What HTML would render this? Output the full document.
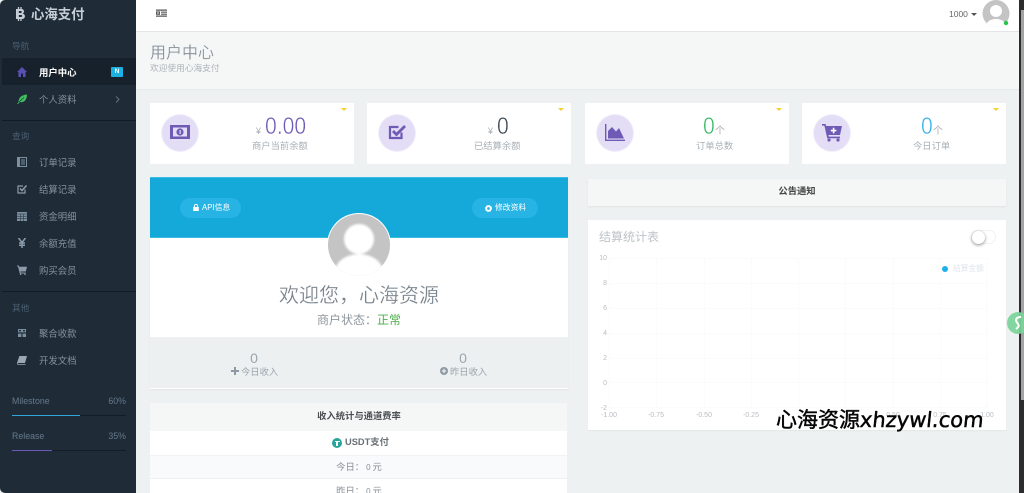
<!DOCTYPE html>
<html lang="zh"><head><meta charset="utf-8"><title>用户中心</title>
<style>
html,body{margin:0;padding:0;width:1024px;height:493px;overflow:hidden;background:#eef1f2}
body{position:relative;font-family:"Liberation Sans","Noto Sans CJK SC",sans-serif}
#w{position:absolute;left:0;top:0;width:1024px;height:493px;filter:blur(.35px);overflow:hidden}
.a{position:absolute}
.t{position:absolute;white-space:nowrap;line-height:14px;height:14px}
.c{text-align:center;transform:translateX(-50%)}
.side{left:0;top:0;width:136px;height:493px;background:#1f2c38;border-radius:5px 0 0 5px}
.sl{font-size:8.6px;color:#4b5e70;left:12px}
.si{font-size:9.4px;color:#84919e;left:39px}
.ic{position:absolute;left:17px;width:10px;height:10px}
.card{position:absolute;top:103px;width:204px;height:61px;background:#fff;border-radius:1px}
.circ{position:absolute;left:12px;top:12px;width:36px;height:36px;border-radius:50%;background:#e3def6;box-shadow:0 0 0 1px #f1eefb}
.circ svg{position:absolute;left:8px;top:7px;width:20px;height:20px}
.tri{position:absolute;right:7px;top:5px;width:0;height:0;border-left:3px solid transparent;border-right:3px solid transparent;border-top:3px solid #f6d02e}
.lb{font-size:9.3px;color:#a9b0b6}
.num{font-size:24px;line-height:24px;height:24px;font-weight:400;transform:scaleX(.88);transform-origin:left center;-webkit-text-stroke:.45px #fff}
.btn{position:absolute;top:198px;height:20px;border-radius:10px;background:#27b4e4;color:#fff;font-size:7.8px;line-height:20px;white-space:nowrap}
.btn svg{position:absolute;top:6px}
.btn span{position:absolute;top:0}
.gy{font-size:9.3px;color:#9aa5ad}
.yl{font-size:7px;color:#b8bec4;text-align:right;width:20px;left:587px}
.xl{font-size:7px;color:#b8bec4;top:409px}
</style></head><body><div id="w">

<!-- main -->
<div class="a" style="left:136px;top:0;width:883px;height:32px;background:#fff;border-bottom:1px solid #e2e5e6;box-sizing:border-box"></div>
<div class="a" style="left:136px;top:32px;width:883px;height:58px;background:#f5f7f7;border-bottom:1px solid #e8ebeb;box-sizing:border-box"></div>

<svg class="a" style="left:156px;top:9px" width="11" height="8" viewBox="0 0 11 8"><path d="M0 .5h11v1.2H0zM5 2.6h6v1.2H5zM5 4.6h6v1.2H5zM0 6.5h11v1.2H0z" fill="#555"/><path d="M0 2.4h4v3.4H0z" fill="#555"/><path d="M1.2 3.4h1.6v1.2H1.2z" fill="#fff"/></svg>
<div class="t" style="left:949px;top:7px;font-size:8.5px;color:#666">1000</div>
<div class="a" style="left:971px;top:13px;width:0;height:0;border-left:3px solid transparent;border-right:3px solid transparent;border-top:3px solid #555"></div>
<svg class="a" style="left:982px;top:0" width="28" height="28" viewBox="0 0 28 28"><defs><clipPath id="top"><circle cx="14" cy="13.5" r="13.5"/></clipPath></defs><g clip-path="url(#top)"><rect width="28" height="28" fill="#c4c4c4"/><circle cx="14" cy="11" r="6" fill="#fff"/><ellipse cx="14" cy="26" rx="10" ry="7" fill="#fff"/></g><circle cx="24" cy="23" r="2.2" fill="#25c44a"/></svg>

<div class="t" style="left:150px;top:43px;font-size:16px;line-height:22px;height:22px;color:#7f8b95;-webkit-text-stroke:.2px #f5f7f7">用户中心</div>
<div class="t" style="left:150px;top:61px;font-size:8.7px;color:#adb5bb">欢迎使用心海支付</div>

<!-- stat cards -->
<div class="card" style="left:150px"><div class="circ"><svg viewBox="0 0 20 20"><path d="M0 3h20v14H0z" fill="#6f5bb5"/><path d="M3 5.5h14v9H3z" fill="#e3def6"/><circle cx="10" cy="10" r="3.6" fill="#6f5bb5"/><path d="M9.5 8h1.2v4H9.5z" fill="#e3def6"/></svg></div><div class="tri"></div></div>
<div class="card" style="left:367px"><div class="circ"><svg viewBox="0 0 20 20"><path d="M14.5 10.5V16H3V5h8.5" fill="none" stroke="#6f5bb5" stroke-width="2.2"/><path d="M6 9l3.5 3.5L18 4" fill="none" stroke="#6f5bb5" stroke-width="2.8"/></svg></div><div class="tri"></div></div>
<div class="card" style="left:585px"><div class="circ"><svg viewBox="0 0 20 20"><path d="M0 2h1.4v15.6H20V19H0z" fill="#6f5bb5"/><path d="M3 16.5V9l4-4 4 4.5L14 6l5 10.5z" fill="#6f5bb5"/></svg></div><div class="tri"></div></div>
<div class="card" style="left:802px"><div class="circ"><svg viewBox="0 0 20 20"><path d="M0 2h3.6l.6 2H20l-2 9H6.4l.4 1.6H18v1.6H5.2L2.4 3.6H0z" fill="#6f5bb5"/><circle cx="7" cy="18" r="1.6" fill="#6f5bb5"/><circle cx="16" cy="18" r="1.6" fill="#6f5bb5"/><path d="M10.8 5.8h1.6v2h2v1.6h-2v2h-1.6v-2h-2V7.8h2z" fill="#fff"/></svg></div><div class="tri"></div></div>

<div class="t" style="left:256px;top:124px;font-size:9px;color:#a9b0b6">¥</div>
<div class="t num" style="left:265px;top:115px;color:#6f5bb5">0.00</div>
<div class="t lb" style="left:252px;top:139px">商户当前余额</div>

<div class="t" style="left:488px;top:124px;font-size:9px;color:#a9b0b6">¥</div>
<div class="t num" style="left:497px;top:115px;color:#3d4854">0</div>
<div class="t lb" style="left:474px;top:139px">已结算余额</div>

<div class="t num" style="left:703px;top:115px;color:#3cb96a">0</div>
<div class="t" style="left:715px;top:125px;font-size:10px;color:#a9b0b6">个</div>
<div class="t lb" style="left:696px;top:139px">订单总数</div>

<div class="t num" style="left:921px;top:115px;color:#3ab2e8">0</div>
<div class="t" style="left:933px;top:125px;font-size:10px;color:#a9b0b6">个</div>
<div class="t lb" style="left:913px;top:139px">今日订单</div>

<!-- profile panel -->
<div class="a" style="left:150px;top:177px;width:418px;height:212px;background:#fff;box-shadow:0 1px 1px #e1e4e5"></div>
<div class="a" style="left:150px;top:177px;width:418px;height:61px;background:#15a9da;border-top:1px solid #3cbbe4;border-bottom:1px solid #3cbbe4;box-sizing:border-box"></div>
<div class="btn" style="left:180px;width:61px"><svg style="left:13px" width="6" height="7" viewBox="0 0 6 7"><path d="M1.4 3V2a1.6 1.6 0 0 1 3.2 0v1" fill="none" stroke="#fff" stroke-width="1"/><path d="M.2 3h5.6v4H.2z" fill="#fff"/></svg><span style="left:22px">API信息</span></div>
<div class="btn" style="left:472px;width:66px"><svg style="left:13px;top:6.5px" width="7" height="7" viewBox="0 0 7 7"><circle cx="3.5" cy="3.5" r="2.3" fill="none" stroke="#fff" stroke-width="1.8"/><circle cx="3.5" cy="3.5" r="3.2" fill="none" stroke="#fff" stroke-width=".7" stroke-dasharray="1 1.5"/></svg><span style="left:23px">修改资料</span></div>
<svg class="a" style="left:326px;top:212px" width="66" height="66" viewBox="0 0 66 66"><defs><clipPath id="av"><circle cx="33" cy="33" r="31"/></clipPath><filter id="bl"><feGaussianBlur stdDeviation="1"/></filter></defs><circle cx="33" cy="33" r="32" fill="#fff"/><g clip-path="url(#av)"><rect width="66" height="66" fill="#c4c4c4"/><g filter="url(#bl)" fill="#fff"><circle cx="33" cy="27" r="15"/><ellipse cx="33" cy="60" rx="24" ry="18"/></g></g></svg>

<div class="t c" style="left:359px;top:283px;font-size:20px;line-height:26px;height:26px;color:#78838c;-webkit-text-stroke:.2px #fff">欢迎您，心海资源</div>
<div class="t c" style="left:359px;top:312px;font-size:12px;line-height:16px;height:16px;color:#8f979e">商户状态：<span style="color:#4cae4c">正常</span></div>

<div class="a" style="left:150px;top:337px;width:418px;height:51px;background:#edf0f1"></div>
<div class="t c" style="left:254px;top:351px;font-size:14px;color:#9aa5ad">0</div>
<svg class="a" style="left:231px;top:367px" width="8" height="8" viewBox="0 0 8 8"><path d="M3 0h2v3h3v2H5v3H3V5H0V3h3z" fill="#8d99a2"/></svg>
<div class="t gy" style="left:241px;top:365px">今日收入</div>
<div class="t c" style="left:463px;top:351px;font-size:14px;color:#9aa5ad">0</div>
<svg class="a" style="left:440px;top:367px" width="8" height="8" viewBox="0 0 8 8"><circle cx="4" cy="4" r="4" fill="#8d99a2"/><path d="M3.4 1.8h1.2v1.6h1.6v1.2H4.6v1.6H3.4V4.6H1.8V3.4h1.6z" fill="#edf0f1"/></svg>
<div class="t gy" style="left:450px;top:365px">昨日收入</div>

<!-- rates panel -->
<div class="a" style="left:150px;top:403px;width:417px;height:90px;background:#fff"></div>
<div class="a" style="left:150px;top:403px;width:417px;height:28px;background:#f5f7f7"></div>
<div class="t c" style="left:359px;top:409px;font-size:9.3px;font-weight:700;color:#4b4f52">收入统计与通道费率</div>
<div class="a" style="left:332px;top:438px;width:10px;height:10px;border-radius:50%;background:#26a69a"></div>
<div class="a" style="left:334.5px;top:440.5px;width:5px;height:1.5px;background:#fff"></div>
<div class="a" style="left:336.3px;top:441px;width:1.5px;height:5px;background:#fff"></div>
<div class="t" style="left:345px;top:435px;font-size:9.3px;font-weight:700;color:#6a7075">USDT支付</div>
<div class="a" style="left:150px;top:455px;width:417px;height:24px;background:#f8fafb;border-top:1px solid #f1f3f4;border-bottom:1px solid #eef0f1;box-sizing:border-box"></div>
<div class="t c" style="left:359px;top:460px;font-size:9.3px;color:#878e94">今日：<span style="font-size:8px;margin:0 2px">0</span>元</div>
<div class="t c" style="left:359px;top:484px;font-size:9.3px;color:#878e94">昨日：<span style="font-size:8px;margin:0 2px">0</span>元</div>

<!-- notice -->
<div class="a" style="left:588px;top:179px;width:418px;height:27px;background:#f5f7f7;box-shadow:0 1px 2px #dfe2e3"></div>
<div class="t c" style="left:797px;top:184px;font-size:9.3px;font-weight:700;color:#444">公告通知</div>

<!-- chart -->
<div class="a" style="left:588px;top:220px;width:418px;height:210px;background:#fff;box-shadow:0 1px 1px #e4e7e8"></div>
<div class="t" style="left:599px;top:229px;font-size:12px;line-height:16px;height:16px;color:#bdc3c7">结算统计表</div>
<div class="a" style="left:971px;top:230px;width:25px;height:14px;border-radius:7px;border:1px solid #f1f2f3;box-sizing:border-box;background:#fff"></div>
<div class="a" style="left:972px;top:230.5px;width:13px;height:13px;border-radius:50%;background:#fff;box-shadow:0 1px 3px #888"></div>
<svg class="a" style="left:600px;top:250px" width="400" height="170" viewBox="600 250 400 170"><g stroke="#fafbfb" stroke-width="1" fill="none"><path d="M609 258.5H987M609 283.5H987M609 308.5H987M609 333.5H987M609 358.5H987M609 382.5H987M609 407.5H987"/><path d="M609.5 258V408M656.5 258V408M704.5 258V408M751.5 258V408M798.5 258V408M845.5 258V408M893.5 258V408M940.5 258V408M987.5 258V408"/></g></svg>
<div class="t yl" style="top:252px">10</div><div class="t yl" style="top:277px">8</div><div class="t yl" style="top:302px">6</div><div class="t yl" style="top:327px">4</div><div class="t yl" style="top:352px">2</div><div class="t yl" style="top:377px">0</div><div class="t yl" style="top:402px">-2</div>
<div class="t xl c" style="left:609px">-1.00</div><div class="t xl c" style="left:656px">-0.75</div><div class="t xl c" style="left:704px">-0.50</div><div class="t xl c" style="left:751px">-0.25</div><div class="t xl c" style="left:893px">0.50</div><div class="t xl c" style="left:940px">0.75</div><div class="t xl c" style="left:987px">1.00</div>
<div class="a" style="left:942px;top:266px;width:6px;height:6px;border-radius:50%;background:#1eb0ec"></div>
<div class="t" style="left:953px;top:262px;font-size:7.7px;color:#dfe4e8">结算金额</div>

<!-- watermark -->
<div class="t" style="left:776px;top:406px;height:28px;line-height:28px;font-size:21px;color:#050505;-webkit-text-stroke:.45px #050505;text-shadow:0 0 2px #fff">心海资源<span style="font-family:'DejaVu Sans',sans-serif;font-size:21px;margin-left:0;display:inline-block;transform:skewX(-6deg)">xhzywl.com</span></div>

<!-- scrollbar -->
<div class="a" style="left:1019px;top:0;width:5px;height:493px;background:#2c2c2c"></div>
<div class="a" style="left:1021px;top:10px;width:3px;height:390px;background:#a3a3a3"></div>

<!-- floating -->
<div class="a" style="left:1007px;top:312px;width:22px;height:22px;border-radius:50%;background:#7bd49a;opacity:.92"></div>
<svg class="a" style="left:1012px;top:315px" width="12" height="16" viewBox="0 0 12 16"><path d="M9 2C4 2 3 5 5 7.5S8 11 4 14" fill="none" stroke="#fff" stroke-width="2"/></svg>

<!-- sidebar -->
<div class="a side"></div>
<div class="a" style="left:2px;top:58px;width:134px;height:27px;background:#17212b"></div>
<div class="a" style="left:2px;top:120px;width:134px;height:1px;background:#131c25"></div>
<div class="a" style="left:2px;top:291px;width:134px;height:1px;background:#131c25"></div>

<svg class="a" style="left:15px;top:7px" width="11" height="14" viewBox="0 0 11 14"><path d="M3.5 0v2M6 0v2M3.5 12v2M6 12v2" stroke="#c5ced6" stroke-width="1.3"/><path d="M1 2h5.5a2.4 2.4 0 0 1 1 4.6A2.7 2.7 0 0 1 7 12H1V2zM3.8 4v2h2a1 1 0 0 0 0-2zM3.8 8v2h2.4a1 1 0 0 0 0-2z" fill="#c5ced6" fill-rule="evenodd"/></svg>
<div class="t" style="left:31px;top:7px;font-size:13.4px;line-height:16px;height:16px;font-weight:700;color:#c5ced6">心海支付</div>

<div class="t sl" style="top:39px">导航</div>
<svg class="ic" style="top:67px" viewBox="0 0 10 10"><path d="M5 0l5 5H8.6v5H6V6.6H4V10H1.4V5H0z" fill="#5a4fb3"/></svg>
<div class="t si" style="top:65.5px;color:#fff;font-weight:700">用户中心</div>
<div class="a" style="left:111px;top:67px;width:12px;height:10px;background:#1fb0e3;border-radius:1px;color:#fff;font-size:6.5px;line-height:10px;text-align:center;font-weight:700">N</div>

<svg class="ic" style="top:94px" viewBox="0 0 10 10"><path d="M1.5 8.5C1.5 3 5 1 10 .5 9.8 6 7 9 3 8L1 10 0 9.4z" fill="#3fbf5f"/><path d="M2 8L7 3.5" stroke="#1f2c38" stroke-width=".6"/></svg>
<div class="t si" style="top:92.5px">个人资料</div>
<svg class="a" style="left:115px;top:96px" width="5" height="7" viewBox="0 0 5 7"><path d="M1 .5L4 3.5 1 6.5" fill="none" stroke="#5f7183" stroke-width="1"/></svg>

<div class="t sl" style="top:129px">查询</div>
<svg class="ic" style="top:157px" viewBox="0 0 10 10"><path d="M.5.5h9v9h-9z" fill="none" stroke="#7d8f9f" stroke-width="1"/><path d="M1 1h2v8H1zM4 2.5h4v1H4zM4 4.5h4v1H4zM4 6.5h4v1H4z" fill="#7d8f9f"/></svg>
<div class="t si" style="top:155.5px">订单记录</div>
<svg class="ic" style="top:184px" viewBox="0 0 10 10"><path d="M8 5.5V9H1V2h5" fill="none" stroke="#8c9cab" stroke-width="1.2"/><path d="M3 4.5l2 2L9.5 1.5" fill="none" stroke="#8c9cab" stroke-width="1.5"/></svg>
<div class="t si" style="top:182.5px">结算记录</div>
<svg class="ic" style="top:211px" viewBox="0 0 10 10"><path d="M0 1h10v9H0z" fill="#7d8f9f"/><path d="M0 3h10M0 5.2h10M0 7.4h10M3.3 3v7M6.6 3v7" stroke="#1f2c38" stroke-width=".5"/></svg>
<div class="t si" style="top:209.5px">资金明细</div>
<svg class="ic" style="top:238px" viewBox="0 0 10 10"><path d="M1.5 0L5 4.5 8.5 0M5 4.5V10M2 5h6M2 7.2h6" fill="none" stroke="#8c9cab" stroke-width="1.5"/></svg>
<div class="t si" style="top:236.5px">余额充值</div>
<svg class="ic" style="top:265px" viewBox="0 0 10 10"><path d="M0 .5h1.8l.4 1.3H10L8.8 6.5H3.4l.3 1h5v1H2.8L1 1.5H0z" fill="#8c9cab"/><circle cx="3.6" cy="9.3" r=".8" fill="#8c9cab"/><circle cx="8" cy="9.3" r=".8" fill="#8c9cab"/></svg>
<div class="t si" style="top:263.5px">购买会员</div>

<div class="t sl" style="top:301px">其他</div>
<svg class="ic" style="top:328px" viewBox="0 0 10 10"><path d="M1 1h8v3.4H1zM1 5.6h3.4V9H1zM5.6 5.6H9V9H5.6z" fill="#7d8f9f"/><path d="M2 2h2v1.4H2zM6 2h2v1.4H6z" fill="#1f2c38"/></svg>
<div class="t si" style="top:326.5px">聚合收款</div>
<svg class="ic" style="top:355px" viewBox="0 0 10 10"><path d="M2.4 1H10L8 8H2C.6 8 .3 9 1.5 9H8.5v.8H1.2C0 9.8-.2 8 .4 6.8z" fill="#9aa8b5"/></svg>
<div class="t si" style="top:353.5px">开发文档</div>

<div class="t" style="left:12px;top:394px;font-size:8.8px;color:#66798b">Milestone</div>
<div class="t" style="right:898px;top:394px;font-size:8.8px;color:#66798b">60%</div>
<div class="a" style="left:12px;top:415px;width:114px;height:1px;background:#141d26"></div>
<div class="a" style="left:12px;top:415px;width:68px;height:1px;background:#2ea8d8"></div>
<div class="t" style="left:12px;top:429px;font-size:8.8px;color:#66798b">Release</div>
<div class="t" style="right:898px;top:429px;font-size:8.8px;color:#66798b">35%</div>
<div class="a" style="left:12px;top:450px;width:114px;height:1px;background:#141d26"></div>
<div class="a" style="left:12px;top:450px;width:40px;height:1px;background:#6f57c0"></div>

</div></body></html>
